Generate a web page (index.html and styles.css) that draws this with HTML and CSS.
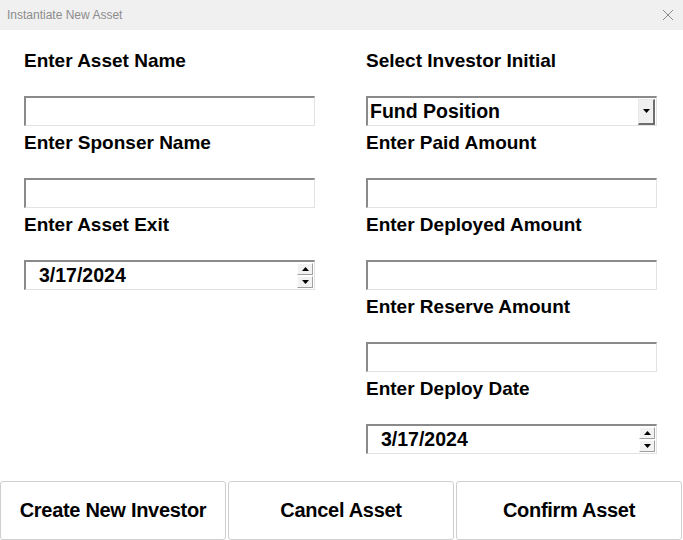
FILE: index.html
```html
<!DOCTYPE html>
<html>
<head>
<meta charset="utf-8">
<link rel="stylesheet" href="styles.css">
</head>
<body>
<div class="window">
  <div class="titlebar">
    <span class="title">Instantiate New Asset</span>
    <svg class="close" width="12" height="12" viewBox="0 0 12 12"><path d="M1 1 L11 11 M11 1 L1 11" stroke="#8a8a8a" stroke-width="1" fill="none"/></svg>
  </div>
  <div class="form">
    <div class="col">
      <div class="field">
        <div class="label">Enter Asset Name</div>
        <div class="input"></div>
      </div>
      <div class="field">
        <div class="label">Enter Sponser Name</div>
        <div class="input"></div>
      </div>
      <div class="field">
        <div class="label">Enter Asset Exit</div>
        <div class="input date">
          <span class="value">3/17/2024</span>
          <div class="spin">
            <div class="spinbtn"><svg width="7" height="4" viewBox="0 0 7 4"><path d="M0 4 L3.5 0 L7 4 Z" fill="#000"/></svg></div>
            <div class="spinbtn"><svg width="7" height="4" viewBox="0 0 7 4"><path d="M0 0 L7 0 L3.5 4 Z" fill="#000"/></svg></div>
          </div>
        </div>
      </div>
    </div>
    <div class="col">
      <div class="field">
        <div class="label">Select Investor Initial</div>
        <div class="input select">
          <span class="value sel">Fund Position</span>
          <div class="dropbtn"><svg width="7" height="4" viewBox="0 0 7 4"><path d="M0 0 L7 0 L3.5 4 Z" fill="#000"/></svg></div>
        </div>
      </div>
      <div class="field">
        <div class="label">Enter Paid Amount</div>
        <div class="input"></div>
      </div>
      <div class="field">
        <div class="label">Enter Deployed Amount</div>
        <div class="input"></div>
      </div>
      <div class="field">
        <div class="label">Enter Reserve Amount</div>
        <div class="input"></div>
      </div>
      <div class="field">
        <div class="label">Enter Deploy Date</div>
        <div class="input date">
          <span class="value">3/17/2024</span>
          <div class="spin">
            <div class="spinbtn"><svg width="7" height="4" viewBox="0 0 7 4"><path d="M0 4 L3.5 0 L7 4 Z" fill="#000"/></svg></div>
            <div class="spinbtn"><svg width="7" height="4" viewBox="0 0 7 4"><path d="M0 0 L7 0 L3.5 4 Z" fill="#000"/></svg></div>
          </div>
        </div>
      </div>
    </div>
  </div>
  <div class="buttons">
    <button class="btn">Create New Investor</button>
    <button class="btn">Cancel Asset</button>
    <button class="btn">Confirm Asset</button>
  </div>
</div>
</body>
</html>
```
FILE: styles.css
```css
html, body {
  margin: 0;
  padding: 0;
  background: #fff;
}
.window {
  width: 683px;
  height: 540px;
  display: flex;
  flex-direction: column;
  font-family: "Liberation Sans", Arial, sans-serif;
  overflow: hidden;
}
.titlebar {
  height: 30px;
  background: #f0f0f0;
  display: flex;
  align-items: center;
  justify-content: space-between;
  padding: 0 9px 0 7px;
  box-sizing: border-box;
}
.title {
  font-size: 12px;
  color: #8c8c8c;
}
.close {
  display: block;
}
.form {
  display: flex;
  gap: 51px;
  padding: 14px 0 0 24px;
  height: 410px;
}
.col {
  width: 291px;
  display: flex;
  flex-direction: column;
}
.field {
  display: flex;
  flex-direction: column;
}
.label {
  height: 34px;
  line-height: 34px;
  margin-bottom: 18px;
  font-size: 19px;
  font-weight: bold;
  color: #000;
  white-space: nowrap;
}
.input {
  height: 30px;
  box-sizing: border-box;
  border-top: 2px solid #8a8a8a;
  border-left: 2px solid #8a8a8a;
  border-right: 1px solid #e3e3e3;
  border-bottom: 1px solid #e3e3e3;
  background: #fff;
  display: flex;
  align-items: center;
  position: relative;
}
.value {
  font-size: 19.5px;
  font-weight: bold;
  color: #000;
  padding-left: 13px;
  flex: 1;
}
.value.sel {
  padding-left: 2px;
}
.spin {
  display: flex;
  flex-direction: column;
  gap: 1px;
  margin-right: 1px;
  align-self: stretch;
  justify-content: center;
}
.spinbtn {
  width: 16px;
  height: 12px;
  box-sizing: border-box;
  background: #f2f2f2;
  border-top: 1px solid #fff;
  border-left: 1px solid #fff;
  border-right: 1px solid #a0a0a0;
  border-bottom: 1px solid #a0a0a0;
  display: flex;
  align-items: center;
  justify-content: center;
}
.dropbtn {
  width: 17px;
  height: 26px;
  box-sizing: border-box;
  margin-right: 1px;
  background: #f0f0f0;
  border-top: 1px solid #e8e8e8;
  border-left: 1px solid #e8e8e8;
  border-right: 2px solid #6e6e6e;
  border-bottom: 2px solid #6e6e6e;
  display: flex;
  align-items: center;
  justify-content: center;
}
.buttons {
  display: flex;
  gap: 2px;
  margin-top: 27px;
}
.btn {
  width: 226px;
  height: 59px;
  background: #fff;
  border: 1px solid #cfcfcf;
  border-radius: 3px;
  font-family: "Liberation Sans", Arial, sans-serif;
  font-size: 20px;
  font-weight: bold;
  color: #000;
  padding: 0;
  letter-spacing: -0.3px;
}
```
